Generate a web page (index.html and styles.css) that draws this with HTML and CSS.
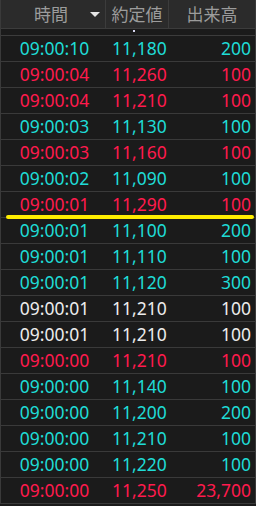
FILE: index.html
```html
<!DOCTYPE html>
<html lang="ja">
<head>
<meta charset="utf-8">
<link rel="stylesheet" href="styles.css">
</head>
<body>
<div class="board">
  <div class="head">
    <div class="hc h-time">時間<span class="tri"></span></div>
    <div class="hc h-price">約定値</div>
    <div class="hc h-vol">出来高</div>
  </div>
  <div class="gap"><span class="mark"></span></div>
  <div class="rows">
    <div class="row up"><span class="t">09:00:10</span><span class="p">11,180</span><span class="v">200</span></div>
    <div class="row dn"><span class="t">09:00:04</span><span class="p">11,260</span><span class="v">100</span></div>
    <div class="row dn"><span class="t">09:00:04</span><span class="p">11,210</span><span class="v">100</span></div>
    <div class="row up"><span class="t">09:00:03</span><span class="p">11,130</span><span class="v">100</span></div>
    <div class="row dn"><span class="t">09:00:03</span><span class="p">11,160</span><span class="v">100</span></div>
    <div class="row up"><span class="t">09:00:02</span><span class="p">11,090</span><span class="v">100</span></div>
    <div class="row dn marked"><span class="t">09:00:01</span><span class="p">11,290</span><span class="v">100</span><span class="hl"></span></div>
    <div class="row up"><span class="t">09:00:01</span><span class="p">11,100</span><span class="v">200</span></div>
    <div class="row up"><span class="t">09:00:01</span><span class="p">11,110</span><span class="v">100</span></div>
    <div class="row up"><span class="t">09:00:01</span><span class="p">11,120</span><span class="v">300</span></div>
    <div class="row eq"><span class="t">09:00:01</span><span class="p">11,210</span><span class="v">100</span></div>
    <div class="row eq"><span class="t">09:00:01</span><span class="p">11,210</span><span class="v">100</span></div>
    <div class="row dn"><span class="t">09:00:00</span><span class="p">11,210</span><span class="v">100</span></div>
    <div class="row up"><span class="t">09:00:00</span><span class="p">11,140</span><span class="v">100</span></div>
    <div class="row up"><span class="t">09:00:00</span><span class="p">11,200</span><span class="v">200</span></div>
    <div class="row up"><span class="t">09:00:00</span><span class="p">11,210</span><span class="v">100</span></div>
    <div class="row up"><span class="t">09:00:00</span><span class="p">11,220</span><span class="v">100</span></div>
    <div class="row dn"><span class="t">09:00:00</span><span class="p">11,250</span><span class="v">23,700</span></div>
  </div>
</div>
</body>
</html>
```
FILE: styles.css
```css
html, body {
  margin: 0;
  padding: 0;
  background: #1b1b1b;
}
body {
  width: 256px;
  height: 506px;
  overflow: hidden;
  font-family: "Noto Sans", "Noto Sans CJK JP", sans-serif;
}
.board {
  width: 254px;
  border-left: 1px solid #3a3a3a;
  border-right: 1px solid #3a3a3a;
  background: #1b1b1b;
}
.head {
  display: grid;
  grid-template-columns: 105px 63px 1fr;
  height: 28px;
  background: #2b2b2b;
  border-bottom: 1px solid #3c3c3c;
}
.hc {
  display: flex;
  align-items: center;
  justify-content: center;
  color: #9c9c9c;
  font-size: 17px;
  font-family: "Noto Sans CJK JP", sans-serif;
  line-height: 28px;
}
.h-time, .h-price {
  border-right: 1px solid #3c3c3c;
}
.h-time {
  position: relative;
  padding-right: 4px;
}
.tri {
  position: absolute;
  right: 5px;
  top: 12px;
  width: 0;
  height: 0;
  border-left: 5px solid transparent;
  border-right: 5px solid transparent;
  border-top: 5px solid #e6e6e6;
}
.gap {
  position: relative;
  height: 6px;
  border-bottom: 1px solid #3c3c3c;
}
.mark {
  position: absolute;
  left: 132px;
  top: 1px;
  width: 2px;
  height: 2px;
  background: #d8d8f0;
}
.row {
  position: relative;
  display: grid;
  grid-template-columns: 105px 63px 1fr;
  height: 25px;
  border-bottom: 1px solid #3a3a3a;
  font-size: 17.5px;
  line-height: 25px;
}
.row .t {
  text-align: center;
  padding-left: 2px;
}
.row .p {
  padding-left: 6px;
  white-space: nowrap;
}
.row .v {
  text-align: right;
  padding-right: 4px;
}
.up { color: #1fdcd6; }
.dn { color: #ff1a4d; }
.eq { color: #ececec; }
.hl {
  position: absolute;
  left: 5px;
  right: 1px;
  bottom: -2px;
  height: 4px;
  border-radius: 2px;
  background: #ffee00;
}
```
